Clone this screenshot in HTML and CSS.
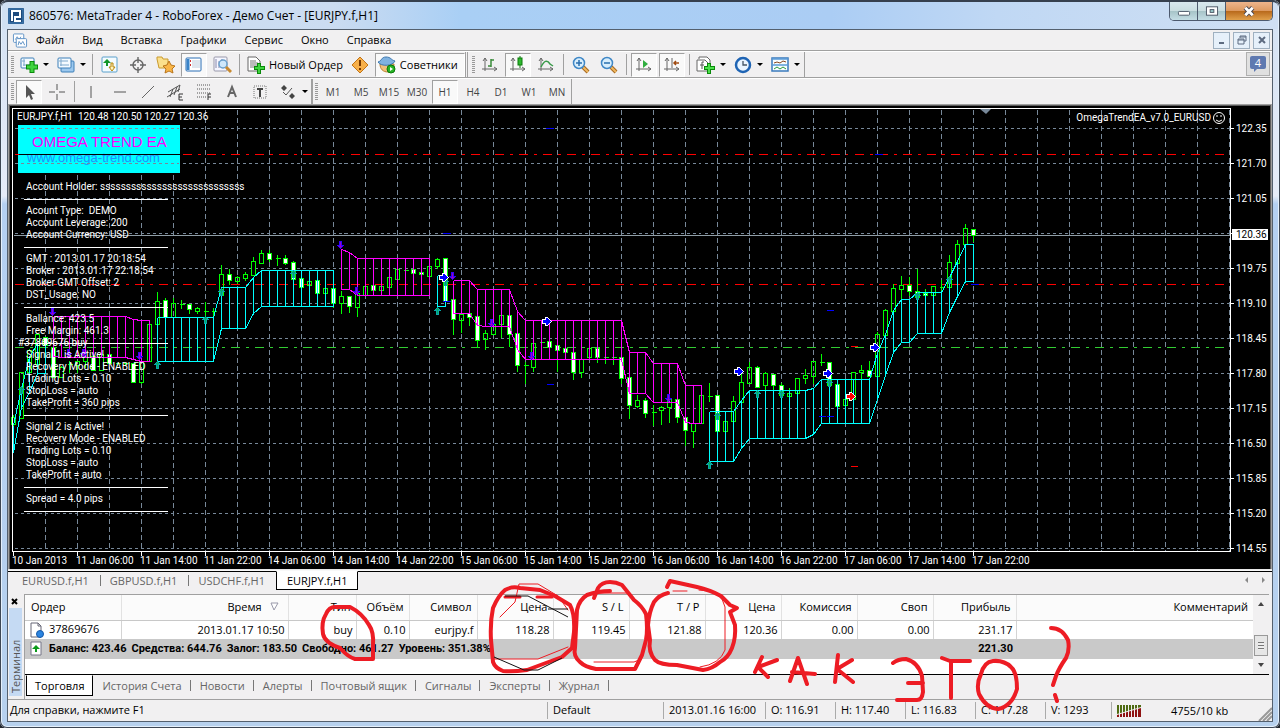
FILE: index.html
```html
<!DOCTYPE html>
<html lang="ru">
<head>
<meta charset="utf-8">
<title>860576: MetaTrader 4 - RoboForex</title>
<link rel="stylesheet" href="styles.css">
</head>
<body>
<div class="window">
  <header class="titlebar">
    <svg class="app-icon" viewBox="0 0 16 16"><rect width="16" height="16" rx="1" fill="#1d4a7c"/><rect x="1" y="1" width="14" height="14" fill="none" stroke="#4b86bd"/><path d="M4 13V3h8v6H7v4h6" fill="none" stroke="#fff" stroke-width="2"/></svg>
    <h1 class="title">860576: MetaTrader 4 - RoboForex - Демо Счет - [EURJPY.f,H1]</h1>
    <div class="win-buttons">
      <button class="wb wb-min" aria-label="Свернуть"><svg viewBox="0 0 28 19"><rect x="8" y="10" width="12" height="4" rx="1" fill="#fff" stroke="#4a5464"/></svg></button>
      <button class="wb wb-max" aria-label="Развернуть"><svg viewBox="0 0 28 19"><rect x="8" y="5" width="12" height="9" fill="#fff" stroke="#4a5464"/><rect x="12" y="8" width="4" height="3" fill="#9cc" stroke="#4a5464"/></svg></button>
      <button class="wb wb-close" aria-label="Закрыть"><svg viewBox="0 0 28 19"><path d="M10 6l8 8M18 6l-8 8" stroke="#4a4650" stroke-width="5"/><path d="M10 6l8 8M18 6l-8 8" stroke="#fff" stroke-width="3"/></svg></button>
    </div>
  </header>

  <main class="client">
    <nav class="menu">
      <svg class="menu-icon" viewBox="0 0 16 16"><rect x="1" y="1" width="11" height="9" rx="1" fill="#fff" stroke="#5b8fc4"/><path d="M3 7l2-3 2 3 2-3" fill="none" stroke="#5b8fc4"/><rect x="4" y="6" width="11" height="9" rx="1" fill="#fff" stroke="#5b8fc4"/><path d="M6 13l1-4 2 3 2-3 2 4" fill="none" stroke="#5b8fc4"/></svg>
      <a href="#">Файл</a><a href="#">Вид</a><a href="#">Вставка</a><a href="#">Графики</a><a href="#">Сервис</a><a href="#">Окно</a><a href="#">Справка</a>
      <div class="mdi">
        <button aria-label="Свернуть окно"><svg viewBox="0 0 12 12"><path d="M3 9h5" stroke="#5d6b80" stroke-width="2"/></svg></button>
        <button aria-label="Восстановить окно"><svg viewBox="0 0 12 12"><path d="M4 4V2h6v5H8M4 3h6M2 5h6v5H2zM2 6h6" fill="none" stroke="#5d6b80"/></svg></button>
        <button aria-label="Закрыть окно"><svg viewBox="0 0 12 12"><path d="M3 3l6 6M9 3l-6 6" stroke="#5d6b80" stroke-width="2"/></svg></button>
      </div>
    </nav>

    <div class="toolbar">
      <div class="bar">
        <span class="grip"></span>
        <button class="tb drop" aria-label="Новый график"><svg viewBox="0 0 20 18"><rect x="2" y="2" width="13" height="10" rx="1" fill="#f4faff" stroke="#3c7fb8"/><path d="M5 3v7M3 5h3M4 9h8" stroke="#7fa8cc" fill="none"/><path d="M13 5v12M7 11h12" stroke="#0a8a0a" stroke-width="5"/><path d="M13 6v10M8 11h10" stroke="#3fd43f" stroke-width="3"/></svg></button>
        <button class="tb drop" aria-label="Профили"><svg viewBox="0 0 20 18"><rect x="5" y="5" width="13" height="11" rx="1" fill="#9cc8ee" stroke="#3c7fb8"/><rect x="2" y="2" width="13" height="10" rx="1" fill="#f4faff" stroke="#3c7fb8"/><path d="M5 3v7M3 5h9M4 9h9" stroke="#7fa8cc" fill="none"/></svg></button>
        <span class="sep"></span>
        <button class="tb" aria-label="Обзор рынка"><svg viewBox="0 0 20 18"><rect x="2" y="1" width="15" height="15" rx="1" fill="#f4fbff" stroke="#5aa0cc"/><path d="M7 3l4 4H8v3H6V7H3z" fill="#12962a"/><path d="M12 15l-3-4h2V7h2v4h2z" fill="#fff4c0" stroke="#b8860b"/></svg></button>
        <button class="tb" aria-label="Окно данных"><svg viewBox="0 0 20 18"><circle cx="10" cy="9" r="5" fill="none" stroke="#666" stroke-width="1.4"/><path d="M10 1v6M10 11v6M2 9h6M12 9h6" stroke="#666" stroke-width="1.4"/></svg></button>
        <button class="tb" aria-label="Навигатор"><svg viewBox="0 0 20 18"><path d="M1 3V1h5l1 2h5v9H3z" fill="#fbe08c" stroke="#c99a2e"/><path d="M13 5l2 4 4 1-3 3 1 4-4-2-4 2 1-4-3-3 4-1z" fill="#f9b648" stroke="#b9751a"/></svg></button>
        <button class="tb on" aria-label="Терминал"><svg viewBox="0 0 20 18"><rect x="2" y="2" width="15" height="13" rx="1" fill="#fff" stroke="#2a6fb5"/><path d="M4 3v11" stroke="#3a84c8" stroke-width="3"/><path d="M8 5h8M8 7h8M8 9h8M8 11h8" stroke="#bcd"/><path d="M6 5h1M6 9h1" stroke="#c33" stroke-width="2"/></svg></button>
        <button class="tb" aria-label="Тестер стратегий"><svg viewBox="0 0 20 18"><rect x="2" y="1" width="13" height="14" rx="1" fill="#f6f6ff" stroke="#99a"/><path d="M4 3v9M7 5v7M10 3v4" stroke="#88a"/><circle cx="11" cy="8" r="4" fill="#cfe8fb" stroke="#6aa0cc" stroke-width="1.5"/><path d="M14 11l5 5" stroke="#c88a30" stroke-width="3"/></svg></button>
        <span class="sep"></span>
        <button class="tb wide"><svg viewBox="0 0 20 18"><path d="M2 1h8l4 4v10H2z" fill="#fff" stroke="#666"/><path d="M4 5h6M4 7h8M4 9h8M4 11h4" stroke="#777"/><path d="M13 7v11M8 12h11" stroke="#0a8a0a" stroke-width="4"/><path d="M13 8v9M9 12h9" stroke="#3fd43f" stroke-width="2"/></svg>Новый Ордер</button>
        <button class="tb" aria-label="Внимание"><svg viewBox="0 0 20 18"><path d="M10 1l8 8-8 8-8-8z" fill="#f8b04a" stroke="#c27416"/><path d="M10 4v6M10 12v2" stroke="#7a3a00" stroke-width="2"/></svg></button>
        <button class="tb wide on"><svg viewBox="0 0 20 18"><path d="M3 8c0 5 3 8 8 8 4 0 6-3 6-8z" fill="#f2c07a" stroke="#b98030"/><path d="M1 6c4-1 3-5 8-5s5 3 9 4c-2 5-14 6-17 1z" fill="#7fb2e0" stroke="#3e78b0"/><circle cx="14" cy="13" r="4" fill="#27b324" stroke="#0a7a0a"/><path d="M13 11l3 2-3 2z" fill="#fff"/></svg>Советники</button>
      </div>
      <div class="bar">
        <span class="grip"></span>
        <button class="tb" aria-label="Бары"><svg viewBox="0 0 20 18"><path d="M5 2v13M2 13h15M3 5l2-3 2 3M14 11l3 2-3 2" fill="none" stroke="#666"/><path d="M11 3v8M11 4h3M8 10h3" stroke="#3a8a3a" stroke-width="1.5"/></svg></button>
        <button class="tb on" aria-label="Свечи"><svg viewBox="0 0 20 18"><path d="M5 2v13M2 13h15M3 5l2-3 2 3M14 11l3 2-3 2" fill="none" stroke="#666"/><path d="M12 0v12" stroke="#0a7a0a"/><rect x="10" y="2" width="4" height="7" fill="#2eb82e" stroke="#0a7a0a"/></svg></button>
        <button class="tb" aria-label="Линия"><svg viewBox="0 0 20 18"><path d="M5 2v13M2 13h15M3 5l2-3 2 3M14 11l3 2-3 2" fill="none" stroke="#666"/><path d="M5 11c3-6 6-8 9-3l3 2" fill="none" stroke="#3a9a4a" stroke-width="1.5"/></svg></button>
        <span class="sep"></span>
        <button class="tb" aria-label="Приблизить"><svg viewBox="0 0 20 18"><path d="M12 11l5 5" stroke="#a86a20" stroke-width="4"/><path d="M12 11l5 5" stroke="#f0b860" stroke-width="2"/><circle cx="8" cy="7" r="5.5" fill="#d8eefc" stroke="#3f87c6" stroke-width="1.5"/><path d="M8 4v6M5 7h6" stroke="#2a6fae" stroke-width="1.5"/></svg></button>
        <button class="tb" aria-label="Отдалить"><svg viewBox="0 0 20 18"><path d="M12 11l5 5" stroke="#a86a20" stroke-width="4"/><path d="M12 11l5 5" stroke="#f0b860" stroke-width="2"/><circle cx="8" cy="7" r="5.5" fill="#d8eefc" stroke="#3f87c6" stroke-width="1.5"/><path d="M5 7h6" stroke="#2a6fae" stroke-width="1.5"/></svg></button>
        <span class="sep"></span>
        <button class="tb on" aria-label="Автопрокрутка"><svg viewBox="0 0 20 18"><path d="M5 2v13M2 13h15M3 5l2-3 2 3M14 11l3 2-3 2" fill="none" stroke="#666"/><path d="M9 4l5 4-5 4z" fill="#2fae3f"/></svg></button>
        <button class="tb on" aria-label="Сдвиг графика"><svg viewBox="0 0 20 18"><path d="M5 2v13M2 13h15M3 5l2-3 2 3M14 11l3 2-3 2M10 2v10" fill="none" stroke="#666"/><path d="M12 7h5M14 5l-2 2 2 2" fill="none" stroke="#a04a10" stroke-width="1.5"/></svg></button>
        <span class="sep"></span>
        <button class="tb drop" aria-label="Индикаторы"><svg viewBox="0 0 20 18"><path d="M3 3V1h8l3 3v9h-2" fill="#fff" stroke="#666"/><path d="M1 4h8l3 3v8H1z" fill="#fff" stroke="#666"/><path d="M8 6H6v7M4 9h4" fill="none" stroke="#555"/><path d="M13 7v11M8 12h11" stroke="#0a8a0a" stroke-width="4"/><path d="M13 8v9M9 12h9" stroke="#4be04b" stroke-width="2"/></svg></button>
        <button class="tb drop" aria-label="Периоды"><svg viewBox="0 0 20 18"><circle cx="10" cy="9" r="7" fill="#e8f4ff" stroke="#1f64b4" stroke-width="2.5"/><path d="M10 5v4h4" fill="none" stroke="#456" stroke-width="1.3"/></svg></button>
        <button class="tb drop" aria-label="Шаблоны"><svg viewBox="0 0 20 18"><rect x="2" y="2" width="16" height="13" fill="#f8fcff" stroke="#3a7abc" stroke-width="1.5"/><path d="M2 3h16M2 9h16" stroke="#5a9ad8" stroke-width="1.500"/><path d="M4 7l3-1 3 1 3-2 3 1" fill="none" stroke="#8a4a20"/><path d="M4 13l3-2 3 2 3-2 3 2" fill="none" stroke="#2a9a3a"/></svg></button>
      </div>
      <button class="chat" aria-label="Сообщения: 4"><span>4</span></button>
    </div>

    <div class="toolbar second">
      <div class="bar">
        <span class="grip"></span>
        <button class="tb on" aria-label="Курсор"><svg viewBox="0 0 20 18"><path d="M7 2v13l3-3 2 5 2-1-2-5h4z" fill="#555"/></svg></button>
        <button class="tb" aria-label="Перекрестие"><svg viewBox="0 0 20 18"><path d="M10 1v6M10 11v6M2 9h6M12 9h6" stroke="#555"/></svg></button>
        <span class="sep"></span>
        <button class="tb" aria-label="Вертикальная линия"><svg viewBox="0 0 20 18"><path d="M9 3v12" stroke="#555"/></svg></button>
        <button class="tb" aria-label="Горизонтальная линия"><svg viewBox="0 0 20 18"><path d="M4 9h12" stroke="#555"/></svg></button>
        <button class="tb" aria-label="Трендовая линия"><svg viewBox="0 0 20 18"><path d="M4 15L16 3" stroke="#666"/></svg></button>
        <button class="tb" aria-label="Каналы"><svg viewBox="0 0 20 18"><path d="M2 9l12-7M1 14l13-8M4 14l3-8M8 12l3-8M12 9l2-7" stroke="#555"/><path d="M17 11h-4v6h4M13 14h3" fill="none" stroke="#333"/></svg></button>
        <button class="tb" aria-label="Фибоначчи"><svg viewBox="0 0 20 18"><path d="M3 2h14M3 6h14M3 10h14M3 14h9" stroke="#555" stroke-dasharray="1 1"/><path d="M17 11h-3v6M14 14h3" fill="none" stroke="#333"/></svg></button>
        <button class="tb" aria-label="Текст"><svg viewBox="0 0 20 18"><path d="M6 14l4-10 4 10M7 10h6" fill="none" stroke="#666" stroke-width="2"/></svg></button>
        <button class="tb" aria-label="Метка"><svg viewBox="0 0 20 18"><rect x="4" y="3" width="12" height="12" fill="none" stroke="#777" stroke-dasharray="1 1"/><path d="M7 6h6M10 6v8" stroke="#444" stroke-width="2"/></svg></button>
        <button class="tb drop" aria-label="Стрелки"><svg viewBox="0 0 20 18"><path d="M6 2l3 3-3 3-3-3zM14 10l3 3-3 3-3-3z" fill="#444"/><path d="M5 9l3 3 6-7" fill="none" stroke="#555"/></svg></button>
      </div>
      <div class="bar frames">
        <span class="grip"></span>
        <button class="tf">M1</button><button class="tf">M5</button><button class="tf">M15</button><button class="tf">M30</button><button class="tf on">H1</button><button class="tf">H4</button><button class="tf">D1</button><button class="tf">W1</button><button class="tf">MN</button>
      </div>
    </div>

    <svg class="chart" viewBox="8 104 1264 466" role="img" aria-label="EURJPY.f,H1">
      <rect x="8" y="104" width="1264" height="466" fill="#a0a0a0"/>
      <rect x="9" y="105" width="1262" height="465" fill="#5c5c5c"/>
      <rect x="10" y="106" width="1260" height="463" fill="#000"/>
      <rect x="8" y="569" width="1264" height="1" fill="#e8e8e8"/>
      <rect x="18" y="125" width="162" height="48" fill="#0ff"/>
      <text x="32" y="147" class="banner">OMEGA TREND EA</text>
      <text x="27" y="162" class="banner-link">www.omega-trend.com</text>
      <g id="plot" transform="translate(.5 .5)" shape-rendering="crispEdges"></g>
      <g class="ct">
        <text x="17" y="120" xml:space="preserve">EURJPY.f,H1  120.48 120.50 120.27 120.36</text>
        <text x="1211" y="121" text-anchor="end">OmegaTrendEA_v7.0_EURUSD</text>
        <text x="26" y="190">Account Holder: ssssssssssssssssssssssssssss</text>
        <text x="26" y="214" xml:space="preserve">Acount Type:  DEMO</text>
        <text x="26" y="226">Account Leverage: 200</text>
        <text x="26" y="238">Account Currency: USD</text>
        <text x="26" y="262">GMT : 2013.01.17 20:18:54</text>
        <text x="26" y="274">Broker : 2013.01.17 22:18:54</text>
        <text x="26" y="286">Broker GMT Offset: 2</text>
        <text x="26" y="298">DST_Usage: NO</text>
        <text x="26" y="322">Ballance: 423.5</text>
        <text x="26" y="334">Free Margin: 461.3</text>
        <text x="18" y="346">#37869676 buy</text>
        <text x="26" y="358">Signal 1 is Active!</text>
        <text x="26" y="370">Recovery Mode - ENABLED</text>
        <text x="26" y="382">Trading Lots = 0.10</text>
        <text x="26" y="394">StopLoss = auto</text>
        <text x="26" y="406">TakeProfit = 360 pips</text>
        <text x="26" y="430">Signal 2 is Active!</text>
        <text x="26" y="442">Recovery Mode - ENABLED</text>
        <text x="26" y="454">Trading Lots = 0.10</text>
        <text x="26" y="466">StopLoss = auto</text>
        <text x="26" y="478">TakeProfit = auto</text>
        <text x="26" y="502">Spread = 4.0 pips</text>
      </g>
      <g fill="none" stroke="#fff"><circle cx="1219" cy="118" r="5.5"/><path d="M1216 120q3 3 6 0M1217 115v2M1221 115v2"/></g>
      <path d="M980 109h11l-5 5z" fill="#778899"/>
      <g id="axis" class="ct"></g>
      <rect x="1232" y="229" width="36" height="11" fill="#fff"/>
      <text x="1236" y="238" class="now">120.36</text>
    </svg>

    <div class="chart-tabs">
      <button>EURUSD.f,H1</button><button>GBPUSD.f,H1</button><button>USDCHF.f,H1</button><button class="active">EURJPY.f,H1</button>
      <span class="scroll-arrows"><svg viewBox="0 0 24 10"><path d="M5 2v6L2 5zM19 2v6l3-3z" fill="#888"/></svg></span>
    </div>

    <section class="terminal">
      <div class="side"><button aria-label="Закрыть терминал"><svg viewBox="0 0 8 8"><path d="M1 1l5 5M6 1L1 6" stroke="#000" stroke-width="2"/></svg></button><span>Терминал</span></div>
      <div class="pane">
        <div class="grid">
          <table>
            <colgroup><col class="c96"><col class="c167"><col class="c68"><col class="c53"><col class="c68"><col class="c76"><col class="c76"><col class="c76"><col class="c76"><col class="c76"><col class="c76"><col class="c83"><col></colgroup>
            <thead><tr><th class="left">Ордер</th><th>Время <svg class="sort" viewBox="0 0 18 9"><path d="M6 1h7L9 8z" fill="#fff" stroke="#99a"/></svg></th><th>Тип</th><th>Объём</th><th>Символ</th><th>Цена</th><th>S / L</th><th>T / P</th><th>Цена</th><th>Комиссия</th><th>Своп</th><th>Прибыль</th><th>Комментарий</th></tr></thead>
            <tbody>
              <tr><td class="left"><svg class="ri" viewBox="0 0 16 16"><path d="M3 1h7l3 3v11H3z" fill="#fff" stroke="#667"/><path d="M10 1v3h3" fill="none" stroke="#667"/><circle cx="12" cy="12" r="3.5" fill="#2b84e0" stroke="#1559a8"/></svg>37869676</td><td>2013.01.17 10:50</td><td>buy</td><td>0.10</td><td>eurjpy.f</td><td>118.28</td><td>119.45</td><td>121.88</td><td>120.36</td><td>0.00</td><td>0.00</td><td>231.17</td><td></td></tr>
              <tr class="total"><td class="left" colspan="11"><svg class="ri" viewBox="0 0 16 16"><path d="M3 1h10v13H3z" fill="#fff" stroke="#778"/><path d="M8 4l4 4H9v3H7V8H4z" fill="#0a9a1a"/></svg><span>Баланс: 423.46</span><span>Средства: 644.76</span><span>Залог: 183.50</span><span>Свободно: 461.27</span><span>Уровень: 351.38%</span></td><td>221.30</td><td></td></tr>
            </tbody>
          </table>
          <div class="scrollbar"><svg viewBox="0 0 8 6"><path d="M4 1l3 4H1z" fill="#444"/></svg><i class="thumb"></i><svg viewBox="0 0 8 6"><path d="M4 5L1 1h6z" fill="#444"/></svg></div>
        </div>
        <div class="tabs"><button class="active">Торговля</button><button>История Счета</button><button>Новости</button><button>Алерты</button><button>Почтовый ящик</button><button>Сигналы</button><button>Эксперты</button><button>Журнал</button></div>
      </div>
    </section>

    <footer class="status">
      <span class="s-help">Для справки, нажмите F1</span><span>Default</span><span>2013.01.16 16:00</span><span>O: 116.91</span><span>H: 117.40</span><span>L: 116.83</span><span>C: 117.28</span><span>V: 1293</span>
      <span class="traffic"><svg viewBox="0 0 24 12"><path d="M0 0h24v2L0 9z" fill="#4f6b12"/><path d="M0 12h24V3L0 10z" fill="#8f1212"/><path d="M2.5 0v12M5.500 0v12M8.500 0v12M11.500 0v12M14.500 0v12M17.500 0v12M20.500 0v12" stroke="#f0f0f0"/></svg><b>4755/10 kb</b></span>
      <svg class="size-grip" viewBox="0 0 14 14"><path d="M1 14L14 1M5 14l9-9M9 14l5-5" stroke="#999" stroke-width="2"/></svg>
    </footer>
  </main>

  <svg class="marks" viewBox="0 0 1280 728" aria-hidden="true">
    <g fill="none" stroke="#ed1c24" stroke-linecap="round" stroke-linejoin="round">
      <g stroke-width="4">
        <path d="M373 659H355Q348 657 340 648 325 643 323 634 321 622 326 614 329 607 335 607H350Q362 613 369 625 374 632 373 645z"/>
        <path d="M505 590Q512 586 520 588L540 590 555 596 570 605Q575 614 574 632L572 648 562 657 527 670Q512 672 503 671 495 668 493 662L491 640Q490 622 493 608 498 596 505 590z"/>
        <path d="M594 598L598 588Q602 582 610 582 616 582 622 585L634 600Q642 606 646 614 648 630 646 640L642 655 635 669H596Q585 667 580 662 573 656 575 648L577 610Q579 600 587 595 598 591 610 591"/>
        <path d="M667 587L670 581 697 587Q710 590 721 596L730 605 737 608 730 612 735 625Q736 638 732 648 728 658 720 662 712 669 703 670L677 665Q660 665 655 660 648 652 650 640L648 625Q649 612 654 602 659 595 668 593"/>
        <path d="M762 657L755 672M777 660L758 667 768 677M790 681L798 658 807 684M792 672L815 674M838 655L835 682M852 660L837 669 853 682"/>
        <path d="M893 663Q898 659 906 659 918 662 922 676L923 692Q922 700 917 700H897M908 683H923M942 658L950 661H970M951 661V698M993 661Q984 662 981 674 976 684 979 694 986 708 998 709 1012 706 1017 689 1017 672 1011 667 1004 660 993 661zM1051 628Q1062 628 1068 640 1070 650 1066 658 1059 668 1056 676L1053 685M1055 695L1057 701"/>
      </g>
      <path d="M500 617L515 602 519 584H538L558 596 568 610M494 659H538L568 647M590 593H628M594 662H634L639 660M673 591H687M699 590Q722 590 725 607V650Q720 664 700 667"/>
      <path d="M505 597h15M537 597h15" stroke-width="3"/>
    </g>
    <path d="M505 596h23l40 21M548 609h20M494 657l30 13h14l24-12" fill="none" stroke="#111"/>
  </svg>
</div>
<script src="chart.js"></script>
</body>
</html>
```
FILE: styles.css
```css
* { box-sizing: border-box; }
body { margin: 0; background: #23272e; font-family: "Open Sans", "Noto Sans", sans-serif; font-size: 11px; line-height: 16px; color: #000; }
button { font: inherit; color: inherit; background: none; border: 0; padding: 0; margin: 0; }
a { color: inherit; text-decoration: none; }
svg { display: block; flex: none; }

.window { position: relative; min-height: 100vh; padding: 0 7px 6px; border: 0 solid #333; border-radius: 7px; background: linear-gradient(180deg, #d3e1f3 0, #e6ecf8 196px, #b4d0f2 204px, #b7d1ee 100%); box-shadow: inset 0 0 0 1px #3d4653, inset 0 0 0 2px #e4f0fc; }
.titlebar { display: flex; align-items: center; height: 29px; margin: 0 -5px; padding-left: 6px; border-radius: 6px 6px 0 0; background: linear-gradient(90deg, #d0e0f2 0, #cbdcf1 26%, #a9cff5 36%, #abcdf4 65%, #c0d8f4 78%, #cfdff3 100%); border-top: 2px solid #36404e; }
.app-icon { width: 16px; height: 16px; margin-right: 5px; }
.title { flex: 1; margin: 0; font-size: 12px; font-weight: 400; white-space: nowrap; }
.win-buttons { display: flex; align-self: flex-start; margin-right: 5px; border: 1px solid #4d5a6e; border-top: 0; border-radius: 0 0 5px 5px; overflow: hidden; }
.wb { width: 28px; height: 18px; background: linear-gradient(180deg, #d9e8ee 0, #c9dde0 50%, #a7c4c8 52%, #c4dde4 100%); border-right: 1px solid #4d5a6e; }
.wb svg { width: 26px; height: 18px; margin: 0 auto; }
.wb-close { width: 46px; border: 0; background: linear-gradient(180deg, #edb48c 0, #dd9a62 48%, #b96a1c 52%, #e0a04c 100%); }

.client { display: flex; flex-direction: column; border: 1px solid #54606e; background: #f1f0f1; }
.menu { display: flex; align-items: center; height: 21px; padding: 0 2px 0 4px; border-bottom: 1px solid #a0a0a0; }
.menu-icon { width: 16px; height: 15px; margin-right: 8px; }
.menu a { margin-right: 18px; }
.mdi { display: flex; gap: 3px; margin-left: auto; }
.mdi button { width: 17px; height: 17px; border: 1px solid #9fb0c0; background: #e6f0fa; }
.mdi svg { width: 12px; height: 12px; margin: 1px auto; }

.toolbar { display: flex; height: 27px; border-top: 1px solid #fff; border-bottom: 1px solid #a0a0a0; }
.toolbar.second { height: 26px; border-bottom: 0; }
.bar { display: flex; align-items: center; padding-left: 3px; border-right: 1px solid #a0a0a0; }
.bar + .bar { border-left: 1px solid #a0a0a0; margin-left: 1px; padding-left: 4px; }
.bar + .frames { margin-left: 0; padding-left: 2px; }
.grip { width: 3px; height: 18px; margin-right: 1px; background: repeating-linear-gradient(180deg, #999 0, #999 1px, #f1f0f1 1px, #f1f0f1 2px); }
.sep { width: 1px; height: 21px; margin: 0 3px; background: #a0a0a0; }
.tb { display: flex; align-items: center; justify-content: center; width: 28px; height: 24px; white-space: nowrap; }
.tb svg { width: 20px; height: 18px; }
.on { border: 1px solid #a0a0a0; border-right-color: #fff; border-bottom-color: #fff; background: #f9f9f9; }
.tb.on { width: 26px; margin: 0 1px; }
.drop { width: 37px; }
.drop::after { content: ""; margin-left: 4px; border: 3px solid transparent; border-top-color: #000; border-bottom: 0; }
.tb.wide { width: auto; gap: 3px; padding: 0 3px; }
.tb.wide.on { width: auto; padding: 0 6px 0 1px; margin-right: 0; }
.chat { width: 24px; height: 24px; margin: 0 2px 0 auto; border: 1px solid #b0b0b0; background: #e0e0e0; }
.chat span { position: relative; display: block; width: 16px; height: 13px; margin: 0 auto 3px; border-radius: 2px; background: #5f79b0; color: #fff; font-size: 11px; line-height: 13px; }
.chat span::after { content: ""; position: absolute; left: 4px; top: 13px; border: 3px solid transparent; border-top-color: #5f79b0; border-left-width: 0; }
.tf { width: 28px; height: 24px; font-size: 10px; color: #444; }
.tf.on { width: 26px; margin: 0 1px; }

.chart { width: 100%; height: auto; }
.ct, .now { font: 10px Roboto, "DejaVu Sans Condensed", sans-serif; fill: #fff; }
.now { fill: #000; }
.banner { font: 15px "Liberation Sans", sans-serif; fill: #f0f; }
.banner-link { font: 13px "Liberation Sans", sans-serif; fill: #1e90ff; }

.chart-tabs { display: flex; gap: 1px; height: 24px; padding-left: 4px; border-top: 1px solid #f8f8f8; background: linear-gradient(#000, #000) 0 0 / 100% 1px no-repeat; color: #666; }
.chart-tabs button { height: 19px; padding: 0 10px; }
.chart-tabs button + button { position: relative; }
.chart-tabs button:not(.active) + button:not(.active)::before, .tabs button:not(.active)::after { content: ""; position: absolute; left: 0; top: 4px; height: 11px; border-left: 1px solid #777; }
.chart-tabs .active { border: 1px solid #000; border-top-color: #fff; background: #fff; color: #000; }
.scroll-arrows { margin: 4px 5px 0 auto; }
.scroll-arrows svg { width: 24px; height: 10px; }

.terminal { display: flex; height: 105px; }
.side { display: flex; flex-direction: column; width: 16px; padding: 2px 2px 3px 1px; }
.side button { width: 8px; height: 12px; margin-left: 2px; }
.side button svg { width: 8px; height: 8px; }
.side span { flex: 1; width: 13px; background: #c5daf3; color: #555; line-height: 13px; writing-mode: vertical-rl; transform: rotate(180deg); padding-top: 3px; }
.pane { flex: 1; min-width: 0; border-left: 1px solid #a0a0a0; margin-right: 3px; }
.grid { display: flex; height: 81px; border-top: 1px solid #a0a0a0; border-bottom: 1px solid #000; background: #fff; }
table { flex: 1; width: 100px; align-self: flex-start; border-collapse: collapse; table-layout: fixed; }
th { height: 25px; padding: 0 5px; font-weight: 400; text-align: right; white-space: nowrap; background: #fbfbfb; border-right: 1px solid #e2e2e2; border-bottom: 1px solid #c8c8c8; }
td { height: 19px; padding: 0 3px; text-align: right; white-space: nowrap; border-right: 1px solid #d4d4d4; }
th.left { padding-left: 6px; }
.left { text-align: left; }
.total td { height: 20px; background: #c9c9c9; font-family: Roboto, sans-serif; font-weight: 700; border: 0; }
.total span { margin-right: 5px; }
.c96 { width: 96px; } .c167 { width: 167px; } .c68 { width: 68px; } .c53 { width: 53px; } .c76 { width: 76px; } .c83 { width: 83px; }
.sort { display: inline-block; width: 18px; height: 9px; }
.ri { display: inline-block; width: 16px; height: 16px; margin-right: 5px; vertical-align: middle; }
td:last-child, th:last-child { border-right: 0; }
.scrollbar { display: flex; flex-direction: column; align-items: center; width: 16px; padding: 6px 0; background: #f1f0f1; }
.scrollbar svg { width: 8px; height: 6px; }
.thumb { width: 14px; height: 21px; margin: auto 0 6px; border: 1px solid #999; background: repeating-linear-gradient(180deg, #777 0, #777 1px, #eee 1px, #eee 3px) center / 6px 8px no-repeat, #e6e6e6; }
.tabs { display: flex; color: #666; }
.tabs button { position: relative; height: 21px; padding: 0 9px; }
.tabs button:not(.active)::after { left: auto; right: 0; top: 5px; }
.tabs .active { margin-left: 1px; border: 1px solid #000; border-top-color: #fff; background: #fff; color: #000; padding: 0 8px; }

.status { display: flex; align-items: center; height: 22px; border-top: 1px solid #a0a0a0; }
.status > span { width: 70px; height: 17px; padding-left: 5px; border-left: 1px solid #aaa; white-space: nowrap; }
.status > .s-help { flex: 1; padding-left: 2px; border: 0; }
.status > span:nth-child(2) { width: 116px; }
.status > span:nth-child(3) { width: 102px; }
.status > span:nth-child(8) { width: 66px; }
.status > .traffic { display: flex; gap: 30px; width: 147px; align-items: center; }
.traffic svg { width: 24px; height: 12px; }
.traffic b { font-weight: 400; }
.size-grip { width: 14px; height: 14px; align-self: flex-end; }

.marks { position: absolute; left: 0; top: 0; width: 100%; pointer-events: none; }
```
FILE: chart.js
```js
// Bars run every 8 units from x = 13: [high, body top, body bottom, low, kind]
// kind: h = hollow, f = filled, d = doji
const bars = `414 417 424 425 h|371 372 418 418 h|348 350 372 372 h|333 334 364 364 h|337 337 345 345 f|345 347 377 377 f|365 367 377 377 h|360 364 364 372 d|360 361 365 372 h|355 357 361 367 h|356 356 370 370 f|354 354 370 370 h|354 354 363 363 f|362 363 363 365 d|362 363 363 364 d|363 363 382 382 f|361 361 382 383 h|324 324 361 361 h|291 301 324 324 h|297 300 317 317 f|297 303 317 317 h|299 304 304 308 d|304 304 309 313 f|306 308 311 313 h|301 311 311 317 d|307 311 311 315 d|264 274 295 295 h|268 274 280 284 f|275 277 281 283 h|271 274 278 280 h|256 261 275 275 h|249 253 263 263 h|249 253 259 261 f|254 258 258 265 d|254 258 263 264 f|260 262 279 279 f|278 278 287 287 f|281 281 285 285 h|280 280 293 293 f|287 288 293 293 h|288 288 303 307 f|290 296 303 313 h|295 296 306 312 f|293 293 307 316 h|286 286 295 295 h|285 285 290 290 f|286 286 290 290 h|277 277 287 287 h|269 269 279 279 h|269 270 270 271 d|269 269 273 273 f|272 272 274 274 f|266 266 276 276 h|257 259 266 268 h|257 258 301 301 f|299 299 319 334 f|314 314 320 332 h|313 313 317 325 f|316 316 340 347 f|329 333 339 349 h|324 324 334 334 h|315 315 324 337 h|315 315 334 346 f|333 333 365 371 f|361 365 365 383 d|343 343 367 371 h|341 342 342 343 d|341 341 347 348 f|345 345 350 371 f|347 348 352 352 f|352 352 372 379 f|358 359 372 377 h|348 348 357 357 h|348 348 357 362 f|356 357 357 363 d|356 357 357 364 d|357 357 378 383 f|377 377 405 418 f|394 400 406 407 h|397 400 413 417 f|404 412 412 425 d|405 407 410 424 h|398 398 407 422 h|399 399 417 422 f|417 417 430 445 f|423 423 431 447 h|395 395 423 423 h|382 396 396 401 d|394 395 431 431 f|410 421 431 433 h|395 401 421 421 h|372 382 402 402 h|361 367 383 383 h|365 367 387 387 f|371 373 385 390 h|374 374 385 389 f|382 385 395 397 f|387 393 396 396 h|377 378 393 393 h|368 375 378 383 h|361 361 376 383 h|353 362 362 365 d|362 362 385 385 f|384 384 406 406 f|395 399 405 405 h|371 372 399 399 h|364 370 372 378 h|360 370 376 376 f|331 334 376 376 h|308 310 335 335 h|283 288 311 311 h|275 285 289 300 h|276 285 291 295 f|268 291 297 297 f|288 293 295 295 f|285 286 295 295 h|279 287 287 293 d|254 262 287 287 h|239 244 263 263 h|223 228 244 244 h|228 229 235 241 f`.split("|").map(r => r.split(" "));

// Trend channels: [colour, x of the first bar, upper edge, lower edge]; "y*n" repeats y n times
const channels = [
  ["#0ff", 13, "425 388 357 343 343", "452 407 392 373 373"],
  ["#f0f", 53, "316*10 319 320*2", "356 357*9 359 361*2"],
  ["#0ff", 157, "317*8 287*4 277 270*10", "361*8 328*4 313 306*10"],
  ["#f0f", 341, "249 252 258*10", "289*2 295*10"],
  ["#0ff", 437, "275*2", "306*2"],
  ["#f0f", 453, "280*3 289*5 311 320*13 352*3 363*4 385*3", "313*3 325 326*4 349 359*13 393*3 402*4 422 423*2"],
  ["#0ff", 709, "411*4 400 390*8 388 379*7 353 334 310 299*2 292*4 277 261 244*2", "461*4 448 438*8 434 423*7 399 375 352 342*2 333*4 312 296 281*2"]
];

const line = (d, stroke, extra = "") => `<path d="${d}" fill="none" stroke="${stroke}" ${extra}/>`;
const expand = s => s.split(" ").flatMap(t => { const [y, n = 1] = t.split("*"); return Array(+n).fill(+y); });
let out = "";

let hGrid = "", vGrid = "";
for (let y = 128; y < 551; y += 35) hGrid += `M14 ${y}H1229`;
for (let x = 45; x < 1230; x += 32) vGrid += x < 180 ? `M${x} 174V550` : `M${x} 109V550`;
out += line(hGrid, "#778899", 'stroke-dasharray="3 3"') + line(vGrid, "#778899", 'stroke-dasharray="5 3"');
out += line("M14 154H1229M14 284H1229", "#f00", 'stroke-dasharray="9 6 3 6"');
out += line("M14 347H1229", "#32cd32", 'stroke-dasharray="9 6 3 6"');
out += line("M18 154H179", "#000");
out += line("M13 235H1230", "#8f9da6");

let wick = "", hollow = "", solid = "";
bars.forEach(([hi, top, bottom, lo, kind], i) => {
  const x = 13 + i * 8;
  if (kind === "d") wick += `M${x} ${hi}V${lo}M${x - 2} ${top}H${x + 3}`;
  else {
    wick += `M${x} ${hi}V${top}M${x} ${bottom}V${lo}`;
    const box = `M${x - 2} ${top}h4V${bottom}h-4z`;
    if (kind === "f") solid += box; else hollow += box;
  }
});
out += line(wick, "#0f0") + line(hollow, "#0f0") + `<path d="${solid}" fill="#fff" stroke="#0f0"/>`;

channels.forEach(([colour, x0, a, b]) => {
  const up = expand(a), down = expand(b);
  const pts = arr => "M" + arr.map((y, i) => `${x0 + i * 8} ${y}`).join("L");
  out += line(pts(up) + pts(down) + up.map((y, i) => `M${x0 + i * 8} ${y}V${down[i]}`).join(""), colour);
});

[[52, 311], [340, 244], [356, 290], [452, 275], [491, 322], [531, 355], [668, 397], [68, 352], [83, 352], [139, 355]].forEach(([x, y]) => {
  out += `<path d="M${x - 1} ${y - 3}h2v4h2l-3 3-3-3h2z" fill="#90c" stroke="#30f"/>`;
});
[[157, 364], [205, 319], [221, 291], [293, 273], [21, 389], [437, 310], [445, 281], [709, 464], [717, 415], [757, 393], [781, 393], [829, 382], [917, 295], [949, 279]].forEach(([x, y]) => {
  out += `<path d="M${x} ${y - 3}l3 3h-2v4h-2v-4h-2z" fill="#0a6" stroke="#0aa8a8"/>`;
});
[[443, 277, "#00f"], [546, 321, "#00f"], [738, 371, "#00f"], [827, 373, "#00f"], [874, 347, "#00f"], [850, 396, "#f00"]].forEach(([x, y, c]) => {
  out += `<path d="M${x - 4} ${y - 2}h3v-2l2 0 4 4-4 4h-2v-2h-3z" fill="${c}" stroke="#fff"/>`;
});
out += line("M545 128h8M442 233h8M442 301h8M546 384h7M826 310h7M818 416h7M826 416h7M970 284h8M874 154h8", "#00f");
out += line("M850 346h7M850 466h7", "#f00");
out += line([199, 247, 307, 343, 415, 487, 511].map(y => `M23 ${y}H167`).join(""), "#fff");

const labels = ["10 Jan 2013"];
[11, 14, 15, 16, 17].forEach(d => ["06", "14", "22"].forEach(h => labels.push(`${d} Jan ${h}:00`)));
let axis = "", ticks = "M12 551V108H1230V551H12";
labels.forEach((t, i) => {
  axis += `<text x="${12 + i * 64}" y="564">${t}</text>`;
  ticks += `M${13 + i * 64} 551v4`;
});
for (let i = 0; i < 13; i++) {
  ticks += `M1230 ${128 + i * 35}h3`;
  if (i !== 3) axis += `<text x="1236" y="${132 + i * 35}">${(122.35 - i * 0.65).toFixed(2)}</text>`;
}
out += line(ticks, "#fff");
document.getElementById("plot").innerHTML = out;
document.getElementById("axis").innerHTML = axis;
```
